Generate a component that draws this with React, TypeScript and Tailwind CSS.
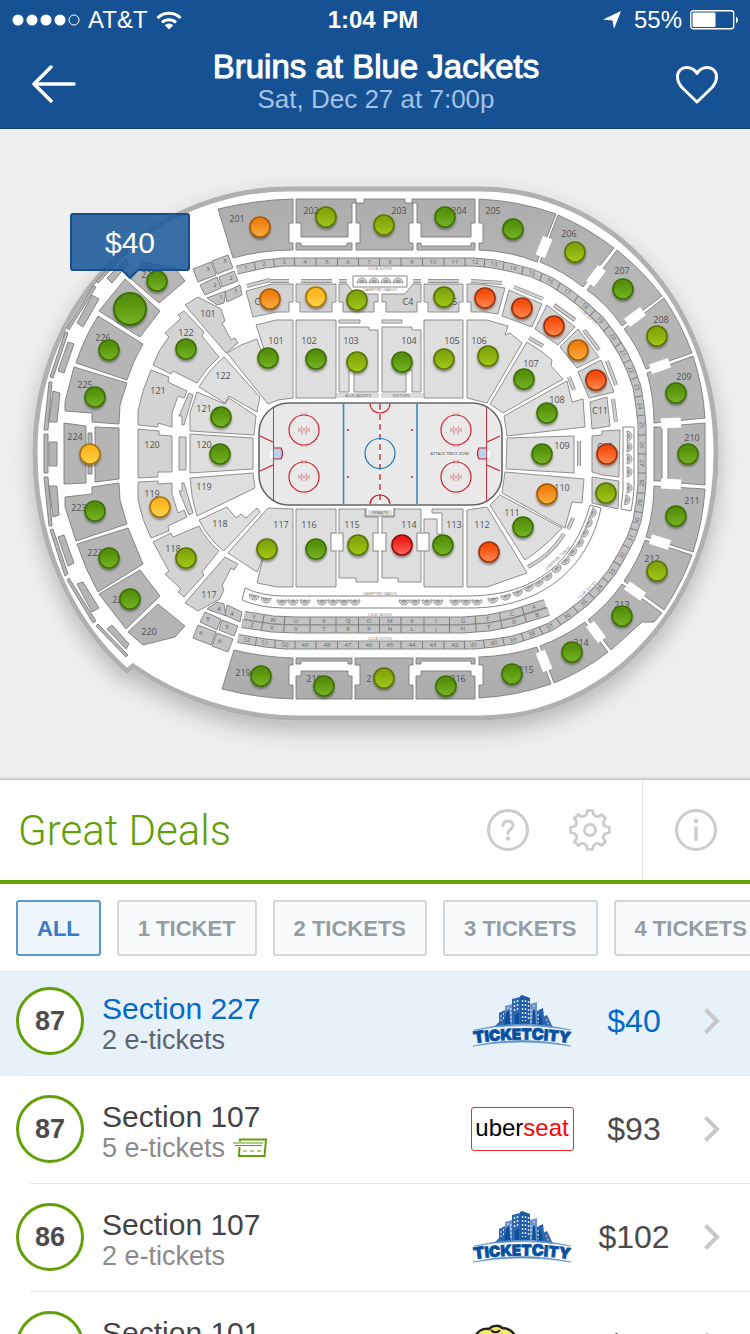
import clsx from "clsx";
import type { ReactNode } from "react";

type Point = [number, number];

/* ---------- seat map data ---------- */

const upperSections = [
  "M218 209Q255 200 293 199V223H289V243H293V250Q262 250 233 258Z",
  "M296 199H356V203H352V223H348V237H301V223H296Z",
  "M296 243H301V246H347V243H352V250H296Z",
  "M364 199V203H356V223H360V243H356V250H413V243H409V223H413V203H405V199Z",
  "M412 199H475V223H471V237H421V223H417V203H412Z",
  "M417 243H421V246H471V243H475V250H417Z",
  "M479 199Q520 201 556 214L537 262Q510 251 479 250V243H483V223H479Z",
  "M558 215Q588 228 614 248L583 287Q563 271 540 262Z",
  "M617 250Q642 270 662 296L622 326Q608 305 587 290Z",
  "M664 298Q682 325 692 353L646 369Q638 347 624 329Z",
  "M693 356Q703 386 705 418L654 423Q654 397 647 373Z",
  "M668 426L705 423V485L668 482Z",
  "M654 427H662V481H654Z",
  "M654 486L705 489Q703 521 693 552L646 537Q654 511 654 486Z",
  "M645 540L692 555Q682 583 664 610L624 581Q638 561 645 540Z",
  "M622 584L662 613L654 622H642L611 650L588 620Q608 604 622 584Z",
  "M585 622L608 652Q584 671 554 683L540 646Q564 637 585 622Z",
  "M537 647L551 684Q516 696 479 698V685H483V665H479V657Q510 656 537 647Z",
  "M416 658H475V664H471V661H421V664H416Z",
  "M421 671H471V676H475V699H416V676H421Z",
  "M355 658H413V665H409V685H413V699H355V685H360V665H355Z",
  "M296 658H352V664H348V661H301V664H296Z",
  "M301 671H348V676H352V699H296V676H301Z",
  "M234 650Q262 657 293 658V665H289V685H293V699Q257 698 222 689Z",
  "M131 279L143 262L175 268L185 281L159 303Z",
  "M125 279L160 311L140 337L99 311Z",
  "M98 316L143 344Q133 361 127 380L76 363Q84 338 98 316Z",
  "M74 367L127 383L120 405L119 424L92 422V413L65 411V402Z",
  "M64 423L86 426V483L64 484Z",
  "M95 427L119 428V479L95 482Z",
  "M88 433H92V474H88Z",
  "M92 487L119 483L120 500L127 524L76 541L65 507V497L92 494Z",
  "M77 544L128 528L143 564L98 592Q85 569 77 544Z",
  "M99 594L140 570L160 596L126 629Z",
  "M128 632L158 604L185 626L175 637L143 645Z",
];

const outerStrips = [
  "M96 281L98 283L128 252L126 250Z",
  "M107 278L112 283L129 263L126 259Z",
  "M93 286L96 287L69 330L67 328Z",
  "M92 295L99 299L83 327L77 323Z",
  "M65 332L68 333L53 378L50 377Z",
  "M68 342L74 344L64 373L58 371Z",
  "M49 382L52 382L48 430H44Z",
  "M53 391L60 393L57 422H49Z",
  "M44 434H48V473H44Z",
  "M49 442H57V466H49Z",
  "M44 477H48L52 526H49Z",
  "M49 486H57L59 515L53 517Z",
  "M50 530L53 529L68 574L65 576Z",
  "M58 537L64 535L74 563L68 566Z",
  "M67 580L69 578L96 621L93 623Z",
  "M77 584L83 582L99 608L92 612Z",
  "M96 626L98 624L128 655L126 657Z",
  "M107 629L112 625L129 644L126 649Z",
];

const clubSections = [
  "M185 305L198 297L221 309L225 321L222 323L231 340L235 338L238 343L226 353Z",
  "M178 315L184 311L204 332L202 336L219 357Q206 368 197 383L173 371L171 374L153 365Q158 350 169 337L165 333L181 318Z",
  "M151 370L169 377L168 382L187 391L184 398L178 396L172 413V427L158 423V427L138 425V411Q142 390 151 370Z",
  "M138 429L159 431V435L172 436V472H158V477L138 478Z",
  "M138 482L158 481V484L172 483V494L178 513L184 510L187 517L168 526L169 531L151 538Q142 520 138 500Z",
  "M153 542L171 533L173 537L199 526Q207 541 219 551L202 572L204 575L184 597L178 592L181 589L165 574L169 571Z",
  "M225 557L238 564L234 570L231 568L222 586L224 589L220 599L198 611L185 603Z",
  "M179 437H186V470H179Z",
  "M189 393L193 395L184 425L182 425V416H179Z",
  "M189 515L193 513L184 483L182 483V491H179Z",
  "M246 291L272 284H293V302H289V312H277L253 317Z",
  "M296 284H336V302H332V312H300V302H296Z",
  "M339 284H347L355 294H378V302H374V312H343V302H339Z",
  "M382 294H405L413 284H421V302H417V312H386V302H382Z",
  "M424 284H463V302H459V312H428V302H424Z",
  "M467 284H480L505 288L498 314L485 312H471V302H467Z",
  "M509 290L542 304L532 327L502 316Z",
  "M547 305L575 327L558 345L535 329Z",
  "M578 329L599 357L577 368L560 347Z",
  "M601 360L614 392L589 398L578 372Z",
  "M607 397L610 426L592 429L590 402Z",
  "M592 436L602 435V431L620 430L619 477L602 475L592 472Z",
  "M592 477L619 481L618 509L592 503Z",
];

const lowerSections = [
  "M224 357L260 397L257 412L229 396L225 403L199 387Q209 370 224 357Z",
  "M197 392L225 404L229 398L256 416L254 435L190 431V413Z",
  "M190 434L253 438V469L190 473Z",
  "M190 478L253 473L255 488L197 516Q191 497 190 478Z",
  "M199 520L227 507L236 518L241 514L246 518L257 508L260 512L224 551Q209 540 199 520Z",
  "M227 353Q240 344 257 339L261 351L264 349L256 325L276 320H293V398L278 400L268 404Z",
  "M296 320H336V398H296Z",
  "M339 327H369V330H378V392H354V370H349V392H339Z",
  "M382 327H412V330H421V392H412V370H406V392H382Z",
  "M424 320H463V398H424Z",
  "M467 320H487L508 326L505 335L510 333L522 343L487 403L467 398Z",
  "M527 342Q541 350 552 360L551 366L563 379L503 413L490 404Z",
  "M504 416L567 381L572 402L583 399L585 427L507 436Z",
  "M507 438L574 436V473L506 469Z",
  "M505 472L584 479L582 503L572 502L565 528L502 493Z",
  "M500 495L562 528Q550 542 535 553L525 560L490 505Z",
  "M487 507L527 573L487 587H467V510Z",
  "M424 519H437V534H442V513H432V509H463V587H424Z",
  "M382 517H394V509H421V582H398V578H382Z",
  "M339 509H365V517H378V582H356V578H339Z",
  "M296 509H336V587H296Z",
  "M293 509V587H277L257 583L263 558L257 572L228 553L268 508Z",
  "M339 320H360V323H339Z",
  "M382 320H402V323H382Z",
];

const cornerBoxes = [
  "M193 269L211 262L216 275L198 282Z",
  "M212 261L228 255L233 268L217 274Z",
  "M200 285L217 277L221 288L205 295Z",
  "M219 277L234 271L238 281L222 287Z",
  "M207 298L226 291L224 303L217 305Z",
  "M225 292L240 285L242 295L227 302Z",
];

const bars =
  "M247 286L270 280M270 281H289M301 281H332M339 281H347M413 281H421M428 281H459M471 281L502 283M514 287L543 299M554 305L575 320M584 330L599 350M607 361L616 385M613 399L616 422M529 338L543 346M569 377L574 390M579 441V466M568 529L573 518M528 567Q550 556 564 534";

// aisle landings: x, y, rotation
const landings: [number, number, number][] = [
  [544, 247, 22],
  [596, 276, 37],
  [635, 317, 54],
  [660, 366, 71],
  [671, 423, 87],
  [671, 484, 93],
  [660, 542, 108],
  [635, 591, 125],
  [596, 632, 143],
  [544, 661, 158],
];

const suites: Point[] = [
  [246, 268], [264, 264], [284, 262], [305, 262], [327, 262], [348, 262], [369, 262],
  [390, 262], [412, 262], [433, 262], [455, 262], [475, 262], [494, 264], [513, 268],
  [532, 273], [550, 281], [567, 292], [585, 306], [600, 320], [613, 337], [623, 353],
  [631, 370], [637, 387], [640, 406], [642, 425], [642, 445], [642, 463], [642, 483],
  [640, 503], [637, 521], [631, 538], [622, 555], [612, 572], [599, 588], [584, 603],
  [567, 616], [550, 627], [532, 634], [513, 640], [494, 643], [474, 645], [455, 645],
  [433, 645], [412, 645], [390, 645], [369, 645], [348, 645], [327, 645], [305, 645],
  [285, 645], [265, 643], [247, 640],
];

const logeTop: Point[] = [
  [254, 617], [273, 620], [296, 621], [324, 621], [348, 621], [369, 621], [390, 621],
  [412, 621], [436, 621], [463, 621], [488, 619], [512, 614], [534, 607],
];
const logeBottom: Point[] = [
  [252, 625], [272, 628], [296, 629], [324, 629], [348, 629], [369, 629], [390, 629],
  [412, 629], [436, 629], [463, 629], [489, 627], [514, 622], [537, 615],
];

// half-moon tables: x, y, rotation
const tables: [number, number, number][] = [
  [254, 597, 12], [266, 600, 8], [282, 602, 0], [293, 602, 0], [305, 602, 0],
  [322, 602, 0], [333, 602, 0], [344, 602, 0], [355, 602, 0], [404, 602, 0],
  [415, 602, 0], [427, 602, 0], [438, 602, 0], [455, 602, 0], [466, 602, 0],
  [477, 602, 0], [493, 600, -6], [506, 597, -14], [518, 593, -20], [529, 588, -25],
  [539, 583, -30], [548, 577, -34], [557, 569, -40], [566, 561, -46], [573, 552, -52],
  [580, 543, -57], [585, 533, -63], [589, 523, -68], [593, 513, -72],
  [629, 436, -90], [629, 447, -90], [629, 459, -90], [629, 472, -90], [629, 488, -88],
  [627, 500, -80], [362, 281, 180], [374, 281, 180], [386, 281, 180], [398, 281, 180],
];

const sectionLabels: [string, number, number][] = [
  ["201", 237, 218], ["202", 311, 210], ["203", 399, 210], ["204", 459, 210],
  ["205", 493, 210], ["206", 569, 233], ["207", 622, 270], ["208", 661, 319],
  ["209", 684, 376], ["210", 692, 437], ["211", 692, 500], ["212", 652, 558],
  ["213", 622, 604], ["214", 581, 642], ["215", 526, 669], ["216", 458, 678],
  ["217", 374, 678], ["218", 314, 678], ["219", 243, 672], ["220", 149, 631],
  ["221", 120, 599], ["222", 95, 552], ["223", 79, 507], ["224", 75, 436],
  ["225", 85, 384], ["226", 103, 337], ["228", 149, 274], ["101", 208, 313],
  ["122", 186, 332], ["121", 158, 390], ["120", 152, 444], ["119", 152, 493],
  ["118", 173, 548], ["117", 209, 594], ["122", 223, 375], ["121", 204, 408],
  ["120", 204, 444], ["119", 204, 486], ["118", 220, 523], ["101", 276, 340],
  ["102", 309, 340], ["103", 351, 340], ["104", 409, 340], ["105", 452, 340],
  ["106", 479, 340], ["107", 531, 363], ["108", 557, 399], ["109", 562, 445],
  ["110", 562, 487], ["111", 512, 512], ["112", 482, 524], ["113", 454, 524],
  ["114", 409, 524], ["115", 352, 524], ["116", 309, 524], ["117", 281, 524],
  ["C1", 260, 301], ["C4", 408, 301], ["C5", 452, 301], ["C7", 516, 308],
  ["C11", 600, 410], ["C12", 605, 446],
];

const markerColors = {
  green: { top: "#559009", bottom: "#76b426", ring: "#3c7005" },
  lime: { top: "#82a50a", bottom: "#a2c81a", ring: "#5b7304" },
  yellow: { top: "#fcb41e", bottom: "#ffd24f", ring: "#a5740a" },
  orange: { top: "#ee7e0e", bottom: "#fbae42", ring: "#a65a06" },
  coral: { top: "#f64c0a", bottom: "#ff8a55", ring: "#9c3208" },
  red: { top: "#ec1a1a", bottom: "#ff6258", ring: "#8c0f0f" },
};

type MarkerColor = keyof typeof markerColors;

const markers: [number, number, MarkerColor][] = [
  [260, 227, "orange"], [326, 217, "lime"], [384, 225, "lime"], [445, 217, "green"],
  [513, 229, "green"], [575, 252, "lime"], [623, 289, "green"], [657, 336, "lime"],
  [676, 393, "green"], [688, 454, "green"], [676, 516, "green"], [657, 571, "lime"],
  [622, 616, "green"], [572, 652, "green"], [512, 674, "green"], [446, 686, "green"],
  [384, 678, "lime"], [324, 686, "green"], [261, 676, "green"], [130, 599, "green"],
  [109, 558, "green"], [95, 511, "green"], [90, 454, "yellow"], [95, 397, "green"],
  [109, 350, "green"], [157, 281, "green"], [186, 349, "green"], [160, 507, "yellow"],
  [186, 558, "lime"], [270, 299, "orange"], [316, 297, "yellow"], [357, 300, "lime"],
  [444, 297, "lime"], [485, 298, "coral"], [522, 308, "coral"], [554, 326, "coral"],
  [578, 350, "orange"], [596, 380, "coral"], [607, 454, "coral"], [606, 493, "lime"],
  [268, 358, "green"], [316, 359, "green"], [357, 362, "lime"], [402, 362, "green"],
  [444, 359, "lime"], [488, 356, "lime"], [524, 379, "green"], [547, 413, "green"],
  [542, 454, "green"], [547, 494, "orange"], [523, 527, "green"], [489, 552, "coral"],
  [443, 545, "green"], [402, 545, "red"], [358, 545, "lime"], [316, 549, "green"],
  [267, 549, "lime"], [221, 417, "green"], [220, 454, "green"],
];

/* ---------- seat map ---------- */

function Shapes({ paths, fill, stroke = "#7c7c7c" }: { paths: string[]; fill: string; stroke?: string }) {
  return (
    <g fill={fill} stroke={stroke} strokeWidth=".9">
      {paths.map((d) => (
        <path key={d} d={d} />
      ))}
    </g>
  );
}

// A band of numbered boxes that follows a list of box centres.
function Band({ points, labels, size }: { points: Point[]; labels: string[]; size: number }) {
  const last = points.length - 1;
  const extend = (a: Point, b: Point): Point => [a[0] + (a[0] - b[0]) / 2, a[1] + (a[1] - b[1]) / 2];
  const line = [extend(points[0], points[1]), ...points, extend(points[last], points[last - 1])];
  const track = line.map((p) => p.join(",")).join(" ");

  return (
    <g fontSize="6" textAnchor="middle" fill="#666">
      <polyline points={track} fill="none" stroke="#858585" strokeWidth={size + 1} strokeLinejoin="round" />
      <polyline points={track} fill="none" stroke="#c3c3c3" strokeWidth={size - 1} strokeLinejoin="round" />
      {points.map(([x, y], i) => {
        const a = line[i];
        const b = line[i + 2];
        const spin = (Math.atan2(b[1] - a[1], b[0] - a[0]) * 180) / Math.PI;
        let angle = spin;
        if (angle > 91) angle -= 180;
        if (angle < -91) angle += 180;
        const next = points[i + 1];
        return (
          <g key={i}>
            {next && (
              <path
                d={`M0 ${-size / 2}V${size / 2}`}
                stroke="#7b7b7b"
                transform={`translate(${(x + next[0]) / 2} ${(y + next[1]) / 2}) rotate(${spin})`}
              />
            )}
            <text transform={`translate(${x} ${y}) rotate(${angle})`} y="2">
              {labels[i]}
            </text>
          </g>
        );
      })}
    </g>
  );
}

function FaceOff({ x, y }: { x: number; y: number }) {
  return (
    <g transform={`translate(${x} ${y})`} stroke="#c8202f" fill="none">
      <circle r="15" strokeWidth="1.2" />
      <path d="M-6 -1H-2V-4M2 -4V-1H6M-6 1H-2V4M2 4V1H6M-2 -17V-15M2 -17V-15M-2 15V17M2 15V17" strokeWidth=".5" />
      <circle r=".8" fill="#c8202f" stroke="none" />
    </g>
  );
}

function Rink() {
  return (
    <g>
      <rect x="259" y="403" width="243" height="102" rx="30" fill="#e9e9e9" stroke="#666" strokeWidth="1.6" />
      <path d="M273.5 407V501M486.5 407V501" stroke="#c8202f" strokeWidth=".9" />
      <path d="M343.5 404V504M417 404V504" stroke="#3a88c0" strokeWidth="1.6" />
      <path d="M380 404V504" stroke="#fff" strokeWidth="2" />
      <path d="M380 404V504" stroke="#cf4048" strokeWidth="1.6" strokeDasharray="6 4" />
      <circle cx="380" cy="453.5" r="15" fill="none" stroke="#1c78b8" strokeWidth="1.2" />
      <path
        d="M370 404C371 416 389 416 390 404M370 504C371 492 389 492 390 504M260 436L273 442M260 471L273 465M500 436L487 442M500 471L487 465"
        fill="none"
        stroke="#c8202f"
        strokeWidth="1.2"
      />
      <path d="M274 448H281Q284 453.500 281 459H274ZM486 448H479Q476 453.500 479 459H486Z" fill="#b9d2ee" />
      <path d="M274 448H281Q284 453.500 281 459H274M486 448H479Q476 453.500 479 459H486" fill="none" stroke="#c8202f" strokeWidth="1.2" />
      <rect x="269" y="449" width="4" height="10" rx="2" fill="#fff" stroke="#ccc" strokeWidth=".6" />
      <rect x="487" y="449" width="4" height="10" rx="2" fill="#fff" stroke="#ccc" strokeWidth=".6" />
      <FaceOff x={304} y={430} />
      <FaceOff x={304} y={477} />
      <FaceOff x={456} y={430} />
      <FaceOff x={456} y={477} />
      <g fill="#c8202f">
        <circle cx="348" cy="430" r="1" />
        <circle cx="348" cy="477" r="1" />
        <circle cx="412" cy="430" r="1" />
        <circle cx="412" cy="477" r="1" />
      </g>
      <text x="450" y="455" fontSize="4" textAnchor="middle" fill="#444">
        ATTACK TWICE ZONE
      </text>
    </g>
  );
}

function SeatMap() {
  return (
    <svg
      viewBox="0 129 750 650"
      className="block w-full shrink-0 bg-[#efefef] font-['Open_Sans','Noto_Sans',sans-serif]"
      role="img"
      aria-label="Arena seat map"
    >
      <defs>
        <filter id="arenaShadow" x="-10%" y="-10%" width="120%" height="125%">
          <feDropShadow dx="0" dy="10" stdDeviation="11" floodColor="#000" floodOpacity=".24" />
        </filter>
        <filter id="pinShadow" x="-30%" y="-30%" width="160%" height="170%">
          <feDropShadow dx="0" dy="2" stdDeviation="1" floodColor="#000" floodOpacity=".4" />
        </filter>
        <linearGradient id="upperFill" gradientUnits="userSpaceOnUse" x1="0" y1="190" x2="0" y2="715">
          <stop offset="0" stopColor="#acacac" />
          <stop offset=".15" stopColor="#b6b6b6" />
          <stop offset=".85" stopColor="#b4b4b4" />
          <stop offset="1" stopColor="#aaa" />
        </linearGradient>
        {Object.entries(markerColors).map(([name, c]) => (
          <linearGradient key={name} id={`pin-${name}`} x1="0" y1="0" x2="0" y2="1">
            <stop offset=".2" stopColor={c.top} />
            <stop offset="1" stopColor={c.bottom} />
          </linearGradient>
        ))}
      </defs>

      <path
        d="M290 189H480C612 189 716 306 716 453C716 601 612 718 480 718H300C237 718 178 698 133 666L127 671C70 620 35 541 35 453C35 306 145 189 290 189Z"
        fill="#fff"
        stroke="#b0b0b0"
        strokeWidth="5"
        filter="url(#arenaShadow)"
      />

      <Shapes paths={upperSections} fill="url(#upperFill)" />
      <Shapes paths={outerStrips} fill="#b5b5b5" />
      <Shapes paths={clubSections} fill="#d3d3d3" stroke="#858585" />
      <Shapes paths={lowerSections} fill="#dedede" stroke="#858585" />
      <Shapes paths={cornerBoxes} fill="#c3c3c3" />
      <g transform="matrix(1 0 0 -1 0 907)">
        <Shapes paths={cornerBoxes} fill="#c3c3c3" />
      </g>

      <path d={bars} fill="none" stroke="#858585" strokeWidth="4" />
      <path d={bars} fill="none" stroke="#cfcfcf" strokeWidth="2.5" />

      {landings.map(([x, y, angle]) => (
        <rect
          key={`${x}-${y}`}
          x="-5"
          y="-10"
          width="10"
          height="20"
          fill="#fff"
          transform={`translate(${x} ${y}) rotate(${angle})`}
        />
      ))}

      <Band points={suites} labels={suites.map((_, i) => String(i + 1))} size={8} />
      <Band points={logeTop} labels={[..."YWUSQOMKIGECA"]} size={8} />
      <Band points={logeBottom} labels={[..."ZXVTRPNLJHFDB"]} size={8} />

      {/* table terraces */}
      <g fill="none" stroke="#858585">
        <path d="M245 588Q262 596 284 596H468C535 596 575 562 590 505L601 508C588 570 540 608 470 608H284Q260 608 242 600Z" />
        <path d="M623 427H634V470Q635 492 631 511L621 509Q624 490 623 470Z" />
        <path d="M353 276H407V287H353Z" />
        {tables.map(([x, y, angle]) => (
          <g key={`${x}-${y}`} transform={`translate(${x} ${y}) rotate(${angle})`}>
            <path d="M-5 -2H-3A3 3 0 0 0 3 -2H5A5 5 0 0 1 -5 -2Z" fill="#ddd" strokeWidth=".8" />
            <path d="M-2 -2A2 2 0 0 0 2 -2Z" fill="#999" strokeWidth=".5" />
          </g>
        ))}
      </g>

      <g fill="#fff">
        <rect x="331" y="533" width="12" height="18" stroke="#858585" />
        <rect x="373" y="533" width="13" height="18" stroke="#858585" />
        <rect x="417" y="533" width="12" height="18" stroke="#858585" />
        <path d="M337 532V552H338V532ZM379 532H381V552H379Z" />
        <path d="M366 508V516H394V508" stroke="#777" />
      </g>
      <g fill="#dcdcdc">
        <rect x="337" y="393" width="42" height="5" />
        <rect x="381" y="393" width="42" height="5" />
        <rect x="368" y="510" width="24" height="5" />
      </g>
      <g fontSize="4" textAnchor="middle" fill="#555">
        <text x="358" y="397">BLUE JACKETS</text>
        <text x="401" y="397">VISITORS</text>
        <text x="380" y="514">PENALTY</text>
        <g fill="#777">
          <text x="380" y="270">CLUB SUITES</text>
          <text x="380" y="291">CAMPFIRE TABLES</text>
          <text x="380" y="595">CAMPFIRE TABLES</text>
          <text x="380" y="616">LOGE BOXES</text>
          <text x="380" y="640">CLUB SUITES</text>
          <text transform="translate(587 317) rotate(43)">CLUB SUITES</text>
          <text transform="translate(588 591) rotate(-43)">CLUB SUITES</text>
          <text transform="translate(559 559) rotate(-43)">CAMPFIRE TABLES</text>
        </g>
      </g>
      <g fontSize="6" textAnchor="middle" fill="#555">
        <text x="208" y="271">3</text>
        <text x="225" y="263">3</text>
        <text x="215" y="287">2</text>
        <text x="231" y="280">2</text>
        <text x="221" y="299">1</text>
        <text x="236" y="293">1</text>
        <text x="219" y="611">4</text>
        <text x="232" y="616">4</text>
        <text x="208" y="621">5</text>
        <text x="227" y="629">5</text>
        <text x="201" y="635">6</text>
        <text x="220" y="643">6</text>
      </g>

      <Rink />

      <g fontSize="9" textAnchor="middle" fill="#505050">
        {sectionLabels.map(([label, x, y]) => (
          <text key={`${label}-${x}`} x={x} y={y + 4}>
            {label}
          </text>
        ))}
      </g>

      <g filter="url(#pinShadow)">
        {markers.map(([x, y, color]) => (
          <circle
            key={`${x}-${y}`}
            cx={x}
            cy={y}
            r="10"
            fill={`url(#pin-${color})`}
            stroke={markerColors[color].ring}
            strokeWidth="1.6"
          />
        ))}
        <circle cx="130" cy="309" r="16" fill="url(#pin-green)" stroke={markerColors.green.ring} strokeWidth="2" />
      </g>

      {/* price callout */}
      <path
        d="M73 214H187Q189 214 189 216V268Q189 270 187 270H138L130 278L122 270H73Q71 270 71 268V216Q71 214 73 214Z"
        fill="#1b5a9a"
        fillOpacity=".88"
        stroke="#164f8c"
        strokeWidth="2"
      />
      <text x="130" y="253" fontSize="30" textAnchor="middle" fill="#fff" className="font-['Liberation_Sans',sans-serif]">
        $40
      </text>
    </svg>
  );
}

/* ---------- header ---------- */

function StatusBar() {
  return (
    <div className="grid h-10 grid-cols-3 items-center px-3 text-2xl leading-none">
      <div className="flex items-center gap-2">
        <svg width="68" height="12" viewBox="0 0 68 12" fill="#fff" aria-hidden="true">
          <circle cx="6" cy="6" r="5.500" />
          <circle cx="20" cy="6" r="5.500" />
          <circle cx="34" cy="6" r="5.500" />
          <circle cx="48" cy="6" r="5.500" />
          <circle cx="62" cy="6" r="5" fill="none" stroke="#fff" />
        </svg>
        <span>AT&amp;T</span>
        <svg width="26" height="19" viewBox="0 0 26 19" fill="none" stroke="#fff" strokeWidth="3" aria-hidden="true">
          <path d="M1.500 7A16.500 16.500 0 0 1 24.500 7M6 11.500A10 10 0 0 1 20 11.500" />
          <path d="M13 18.500L8.800 14.300A6 6 0 0 1 17.200 14.300Z" fill="#fff" stroke="none" />
        </svg>
      </div>
      <span className="pr-1 text-center font-bold">1:04 PM</span>
      <div className="flex items-center justify-end gap-2">
        <svg width="20" height="18" viewBox="0 0 20 18" fill="#fff" className="mr-1" aria-hidden="true">
          <path d="M19 0L12 18L10.500 9.500L1 8.500Z" />
        </svg>
        <span>55%</span>
        <svg width="48" height="20" viewBox="0 0 48 20" aria-hidden="true">
          <rect x=".75" y=".75" width="43" height="18" rx="2.500" fill="none" stroke="#fff" strokeWidth="1.300" />
          <rect x="2.500" y="2.500" width="23" height="14.500" rx="1" fill="#fff" />
          <path d="M46 6.500Q48 7.500 48 10T46 13.500Z" fill="#fff" />
        </svg>
      </div>
    </div>
  );
}

function Header() {
  return (
    <header className="shrink-0 border-b border-[#0d3f78] bg-[#165194] text-white">
      <StatusBar />
      <div className="flex h-[88px] items-center justify-between px-8">
        <button type="button" aria-label="Back" className="cursor-pointer">
          <svg width="44" height="38" viewBox="0 0 44 38" fill="none" stroke="#fff" strokeWidth="3.500" strokeLinecap="round" strokeLinejoin="round">
            <path d="M42 19H2M19 2L2 19L19 36" />
          </svg>
        </button>
        <div className="pb-0.5 text-center">
          <h1 className="text-[33px] leading-8 [-webkit-text-stroke:1px]">Bruins at Blue Jackets</h1>
          <p className="text-[26px] leading-8 text-[#a3c3e6]">Sat, Dec 27 at 7:00p</p>
        </div>
        <button type="button" aria-label="Add to favorites" className="cursor-pointer">
          <svg width="42" height="40" viewBox="0 0 42 40" fill="none" stroke="#fff" strokeWidth="3" strokeLinejoin="round">
            <path d="M21 38L7 24.500C3 20.500 1.500 17 1.500 13C1.500 7 5.500 3.500 10.500 3.500C15.500 3.500 19 6 21 9.500C23 6 26.500 3.500 31.500 3.500C36.500 3.500 40.500 7 40.500 13C40.500 17 39 20.500 35 24.500Z" />
          </svg>
        </button>
      </div>
    </header>
  );
}

/* ---------- deals ---------- */

function gearPath() {
  const steps: string[] = [];
  for (let i = 0; i < 8; i++) {
    const base = (i * Math.PI) / 4;
    const at = (r: number, a: number) =>
      `${(21 + r * Math.sin(base + a)).toFixed(1)} ${(21 - r * Math.cos(base + a)).toFixed(1)}`;
    steps.push(`${i ? "L" : "M"}${at(16, -0.22)}L${at(19.5, -0.14)}L${at(19.5, 0.14)}L${at(16, 0.22)}Q${at(13.6, 0.39)} ${at(16, 0.565)}`);
  }
  return steps.join("") + "Z";
}

function DealsHeader() {
  return (
    <div className="relative flex h-[105px] shrink-0 items-stretch border-b-4 border-[#64a00a] border-t border-t-[#c8c8c8] bg-white shadow-[0_-1px_2px_rgba(0,0,0,0.15)]">
      <h2 className="flex flex-1 items-center pl-[18px] font-['Roboto',sans-serif] text-[42px] font-light text-[#5f9e06]">
        Great Deals
      </h2>
      <button type="button" aria-label="Help" className="flex w-[82px] cursor-pointer items-center justify-center">
        <svg width="42" height="42" viewBox="0 0 42 42" fill="none" stroke="#ccc" strokeWidth="3" strokeLinecap="round">
          <circle cx="21" cy="21" r="19.500" />
          <path d="M16 16.500C16 10.500 26 10.500 26 16.500C26 20.500 21 20 21 24.500" />
          <circle cx="21" cy="29.500" r="2.200" fill="#ccc" stroke="none" />
        </svg>
      </button>
      <button type="button" aria-label="Settings" className="mr-[11px] flex w-[82px] cursor-pointer items-center justify-center">
        <svg width="42" height="42" viewBox="0 0 42 42" fill="none" stroke="#ccc" strokeWidth="2.800" strokeLinejoin="round">
          <path d={gearPath()} />
          <circle cx="21" cy="21" r="5.500" />
        </svg>
      </button>
      <button type="button" aria-label="Info" className="flex w-[108px] cursor-pointer items-center justify-center border-l border-[#e2e2e2] pr-0.5">
        <svg width="42" height="42" viewBox="0 0 42 42" fill="none" stroke="#ccc" strokeWidth="3" strokeLinecap="round">
          <circle cx="21" cy="21" r="19.500" />
          <path d="M21 18.500V30.500" strokeWidth="3.500" />
          <circle cx="21" cy="12" r="2.200" fill="#ccc" stroke="none" />
        </svg>
      </button>
    </div>
  );
}

const filters = ["ALL", "1 TICKET", "2 TICKETS", "3 TICKETS", "4 TICKETS"];

function Filters() {
  return (
    <div className="flex shrink-0 gap-4 overflow-hidden border-b border-[#e4e6e8] bg-white px-4 pt-4 pb-[15px]">
      {filters.map((filter, i) => (
        <button
          key={filter}
          type="button"
          aria-pressed={i === 0}
          className={clsx(
            "h-14 shrink-0 cursor-pointer rounded-[3px] border-2 px-[19px] text-[22px] font-bold",
            i === 0
              ? "border-[#5b97d0] bg-[#edf5fd] text-[#3a7ac8]"
              : "border-[#d2d7db] bg-[#f9fafc] text-[#949da6]"
          )}
        >
          {filter}
        </button>
      ))}
    </div>
  );
}

function TicketCityLogo() {
  return (
    <svg width="104" height="56" viewBox="0 0 104 56" role="img" aria-label="TicketCity">
      <g fill="#2f66ad">
        <path d="M24 34L29 29V20L37 16V33Z" />
        <path d="M35 33V13L42 11V33Z" fill="#6d93c8" />
        <path d="M42 32V6L50 4V31Z" />
        <path d="M50 31V3L52 2L60 5V31Z" fill="#1f5aa6" />
        <path d="M60 31V11L67 9V32Z" fill="#6d93c8" />
        <path d="M67 32V18L73 15L75 33Z" fill="#2a62ab" />
        <path d="M73 33V24L77 22L83 35Z" />
      </g>
      <g fill="#0b4f9a">
        <path d="M34 33L36 19L39 17L41 33Z" />
        <path d="M45 31V22L49 20V31Z" />
        <path d="M62 31L63 17L65 17L66 32Z" />
        <path d="M69 33V22L71 22L73 33Z" />
      </g>
      <g stroke="#dbe8f6" strokeWidth="1.400" strokeDasharray="2 2" fill="none">
        <path d="M44.500 8V20M47.500 7V19M52.500 7V28M55.500 7V28M58.500 8V28" />
        <path d="M31 22V30M33.500 20V28M38 14V18M64 12V16M68 21V30" strokeWidth="1" />
        <path d="M76 26L79 33M41 15V30M61 16V29" strokeWidth="1" />
      </g>
      <path d="M4 37Q52 25 101 37Q52 28 4 37Z" fill="#5b8fc6" stroke="#5b8fc6" strokeWidth=".6" />
      <path d="M3 53Q52 42 101 53Q52 45 3 53Z" fill="#5b8fc6" stroke="#5b8fc6" strokeWidth=".6" />
      <path id="ticketCityBase" d="M0 51Q52 42 104 51" fill="none" />
      <text
        fontSize="15"
        fontWeight="900"
        fill="#08509f"
        stroke="#08509f"
        strokeWidth=".8"
        className="font-['Inter',sans-serif]"
      >
        <textPath href="#ticketCityBase" startOffset="50%" textAnchor="middle">
          <tspan fontSize="16">T</tspan>ICKET<tspan fontSize="16">C</tspan>ITY
        </textPath>
      </text>
    </svg>
  );
}

function UberseatLogo() {
  return (
    <div className="flex h-11 w-[103px] items-center justify-center rounded-[3px] border border-[#f02828] bg-white text-2xl text-black">
      <span className="pb-0.5">
        uber<span className="text-[#fb0505]">seat</span>
      </span>
    </div>
  );
}

function BadgeLogo() {
  return (
    <svg width="104" height="56" viewBox="0 0 104 56" role="img" aria-label="Seller">
      <path
        d="M4 22C7 14 13 11 19 12C22 8 30 8 32 11C39 11 44 15 47 22V54H4Z"
        fill="#f3ea6b"
        stroke="#222"
        strokeWidth="2.500"
      />
      <path d="M21 13C23 16 28 16 30 13" fill="none" stroke="#222" strokeWidth="2" />
    </svg>
  );
}

function FastTicket() {
  return (
    <svg width="34" height="20" viewBox="0 0 34 20" fill="none" stroke="#62a008" aria-label="Instant delivery" role="img">
      <path d="M7 3.500V1.500H33L31.500 18H6L6.500 9" strokeWidth="2" />
      <path d="M0 5H30M2 7.500H29" strokeWidth="1.200" />
      <path d="M10 13H28" strokeWidth="1.200" strokeDasharray="4 3" />
    </svg>
  );
}

type Deal = {
  score: number;
  section: string;
  tickets: string;
  price: string;
  logo: ReactNode;
  instant?: boolean;
  selected?: boolean;
};

const deals: Deal[] = [
  { score: 87, section: "Section 227", tickets: "2 e-tickets", price: "$40", logo: <TicketCityLogo />, selected: true },
  { score: 87, section: "Section 107", tickets: "5 e-tickets", price: "$93", logo: <UberseatLogo />, instant: true },
  { score: 86, section: "Section 107", tickets: "2 e-tickets", price: "$102", logo: <TicketCityLogo /> },
  { score: 86, section: "Section 101", tickets: "2 e-tickets", price: "$99", logo: <BadgeLogo /> },
];

function DealRow({ deal }: { deal: Deal }) {
  return (
    <li className={clsx(deal.selected ? "bg-[#e6f1fa]" : "bg-white")}>
      <a href="#" className={clsx("flex items-center pr-[30px] pb-5 pl-4", deal.selected ? "pt-[15px]" : "pt-[19px]")}>
        <span className="flex size-[68px] shrink-0 items-center justify-center rounded-full border-3 border-[#62a008] bg-white text-[27px] font-bold text-[#4c4c4c]">
          {deal.score}
        </span>
        <span className="flex-1 pt-1.5 pl-[18px]">
          <span className={clsx("block text-[30px] leading-8", deal.selected ? "text-[#0468c8]" : "text-[#434343]")}>
            {deal.section}
          </span>
          <span
            className={clsx(
              "flex items-center gap-2 text-[27px] leading-[30px]",
              deal.selected ? "text-[#5a646e]" : "text-[#8a8a8a]"
            )}
          >
            {deal.tickets}
            {deal.instant && <FastTicket />}
          </span>
        </span>
        <span className="flex w-[104px] justify-center">{deal.logo}</span>
        <span
          className={clsx(
            "ml-3 w-24 text-center text-[32px] leading-8",
            deal.selected ? "text-[#0468c8]" : "text-[#4a4a4a]"
          )}
        >
          {deal.price}
        </span>
        <svg width="16" height="26" viewBox="0 0 16 26" fill="none" stroke="#c7c7cc" strokeWidth="4" className="ml-[22px]" aria-hidden="true">
          <path d="M1.500 1.500L13 13L1.500 24.500" />
        </svg>
      </a>
      <div className="ml-[30px] h-px bg-[#e3e5e7]" />
    </li>
  );
}

export default function App() {
  return (
    <div className="flex h-screen flex-col overflow-hidden bg-white font-['Liberation_Sans',Arial,sans-serif]">
      <Header />
      <SeatMap />
      <DealsHeader />
      <Filters />
      <ul className="min-h-0 flex-1 overflow-hidden">
        {deals.map((deal, i) => (
          <DealRow key={i} deal={deal} />
        ))}
      </ul>
    </div>
  );
}
